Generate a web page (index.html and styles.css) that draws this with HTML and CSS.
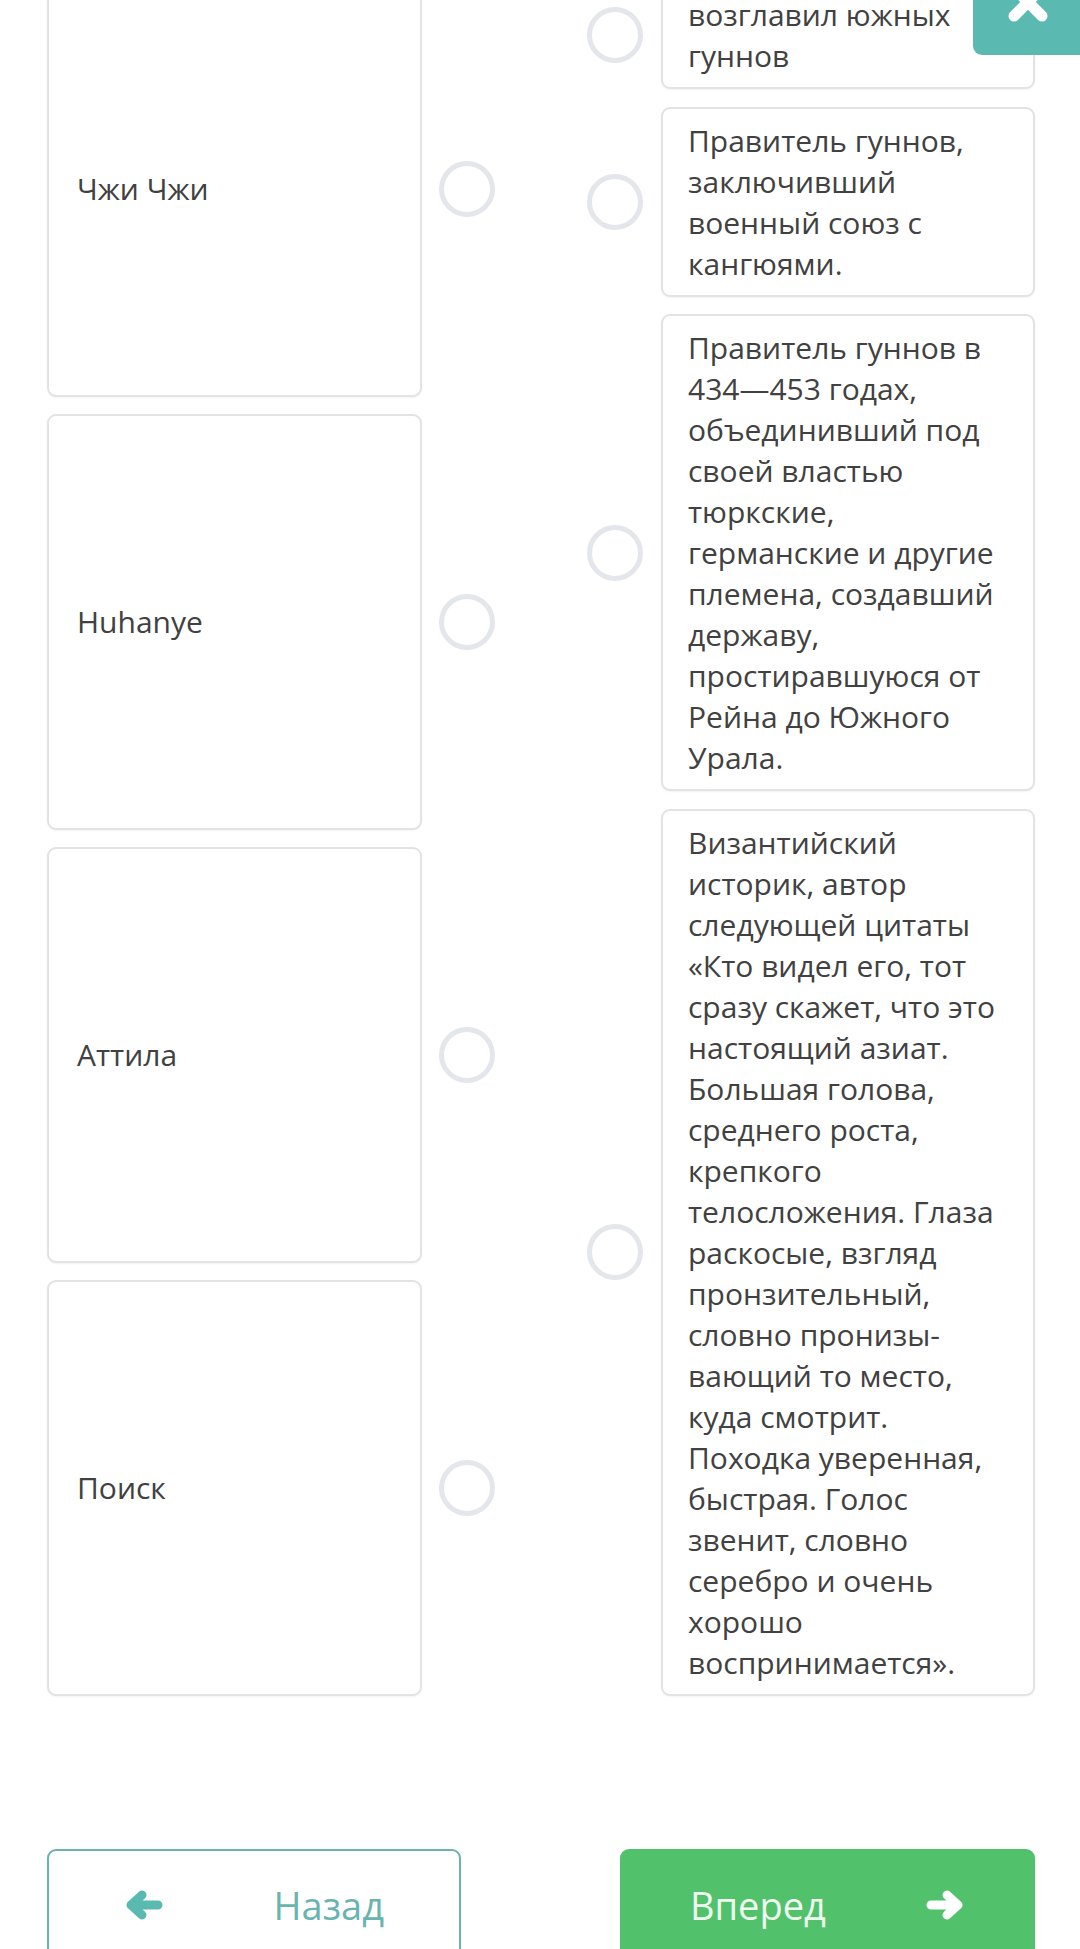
FILE: index.html
```html
<!DOCTYPE html>
<html lang="ru">
<head>
<meta charset="utf-8">
<title>Сопоставление</title>
<link rel="stylesheet" href="styles.css">
</head>
<body>
<div class="page">
  <button class="close" aria-label="Закрыть">
    <svg class="close-icon" viewBox="0 0 60 60" width="60" height="60">
      <path d="M16 16 L44 44 M44 16 L16 44" stroke="#fff" stroke-width="11" stroke-linecap="round" fill="none"/>
    </svg>
  </button>

  <div class="match">
    <div class="col col-left">
      <div class="left-item">
        <div class="card card-left">Чжи Чжи</div>
        <span class="circle"></span>
      </div>
      <div class="left-item">
        <div class="card card-left">Huhanye</div>
        <span class="circle"></span>
      </div>
      <div class="left-item">
        <div class="card card-left">Аттила</div>
        <span class="circle"></span>
      </div>
      <div class="left-item">
        <div class="card card-left">Поиск</div>
        <span class="circle"></span>
      </div>
    </div>

    <div class="col col-right">
      <div class="right-item">
        <span class="circle"></span>
        <div class="card card-right">возглавил южных<br>гуннов</div>
      </div>
      <div class="right-item">
        <span class="circle"></span>
        <div class="card card-right">Правитель гуннов,<br>заключивший<br>военный союз с<br>кангюями.</div>
      </div>
      <div class="right-item">
        <span class="circle"></span>
        <div class="card card-right">Правитель гуннов в<br>434—453 годах,<br>объединивший под<br>своей властью<br>тюркские,<br>германские и другие<br>племена, создавший<br>державу,<br>простиравшуюся от<br>Рейна до Южного<br>Урала.</div>
      </div>
      <div class="right-item">
        <span class="circle"></span>
        <div class="card card-right">Византийский<br>историк, автор<br>следующей цитаты<br>«Кто видел его, тот<br>сразу скажет, что это<br>настоящий азиат.<br>Большая голова,<br>среднего роста,<br>крепкого<br>телосложения. Глаза<br>раскосые, взгляд<br>пронзительный,<br>словно пронизы-<br>вающий то место,<br>куда смотрит.<br>Походка уверенная,<br>быстрая. Голос<br>звенит, словно<br>серебро и очень<br>хорошо<br>воспринимается».</div>
      </div>
    </div>
  </div>

  <div class="nav">
    <button class="btn btn-back">
      <svg class="arrow" viewBox="0 0 38 30" width="38" height="30">
        <path d="M5 15 H32 M16 5 L5 15 L16 25" stroke="#5ab9b1" stroke-width="9" stroke-linecap="round" stroke-linejoin="round" fill="none"/>
      </svg>
      <span>Назад</span>
    </button>
    <button class="btn btn-next">
      <span>Вперед</span>
      <svg class="arrow" viewBox="0 0 38 30" width="38" height="30">
        <path d="M33 15 H6 M22 5 L33 15 L22 25" stroke="#ffffff" stroke-width="9" stroke-linecap="round" stroke-linejoin="round" fill="none"/>
      </svg>
    </button>
  </div>
</div>
</body>
</html>
```

FILE: styles.css
```css
html, body {
  margin: 0;
  padding: 0;
  background: #ffffff;
}

body {
  width: 1080px;
  height: 1949px;
  overflow: hidden;
  font-family: "Open Sans", "Noto Sans", "Liberation Sans", sans-serif;
  color: #414141;
}

.page {
  position: relative;
  display: flow-root;
  width: 1080px;
  height: 1949px;
}

.close {
  position: absolute;
  top: 0;
  right: 0;
  width: 107px;
  height: 55px;
  border: none;
  padding: 0;
  margin: 0;
  background: #5ab9b1;
  border-bottom-left-radius: 9px;
  z-index: 2;
  overflow: hidden;
}

.close-icon {
  position: absolute;
  left: 25px;
  top: -28px;
}

.match {
  display: flex;
  align-items: stretch;
  margin-top: -19px;
  padding-left: 47px;
  gap: 92px;
}

.col {
  width: 448px;
  display: flex;
  flex-direction: column;
  gap: 17.5px;
}

.left-item {
  flex: 1;
  display: flex;
  align-items: center;
  gap: 17px;
}

.right-item {
  display: flex;
  align-items: center;
  gap: 18px;
}

.card {
  box-sizing: border-box;
  width: 375px;
  background: #ffffff;
  border: 2px solid #e3e3e3;
  border-radius: 9px;
  box-shadow: 0 1px 2px rgba(0, 0, 0, 0.05);
  font-size: 30px;
  line-height: 41px;
  white-space: nowrap;
}

.card-left {
  align-self: stretch;
  display: flex;
  align-items: center;
  padding: 0 26px 0 28px;
}

.card-right {
  padding: 11px 18px 11px 25px;
}

.circle {
  flex: none;
  box-sizing: border-box;
  width: 56px;
  height: 56px;
  border: 5px solid #e3e6ea;
  border-radius: 50%;
}

.nav {
  display: flex;
  margin-top: 153px;
  padding-left: 47px;
  gap: 159px;
}

.btn {
  box-sizing: border-box;
  width: 414px;
  height: 112px;
  border-radius: 9px;
  display: flex;
  align-items: center;
  justify-content: space-between;
  font-family: "Open Sans", "Noto Sans", "Liberation Sans", sans-serif;
  font-size: 38px;
  margin: 0;
}

.btn-back {
  background: #ffffff;
  border: 2px solid #6ab4b0;
  color: #6ab4b0;
  padding: 0 75px 0 77px;
}

.btn-next {
  width: 415px;
  background: #52c16b;
  border: none;
  color: #eefaf0;
  padding: 0 72px 0 70px;
}

.arrow {
  flex: none;
  display: block;
}
```
